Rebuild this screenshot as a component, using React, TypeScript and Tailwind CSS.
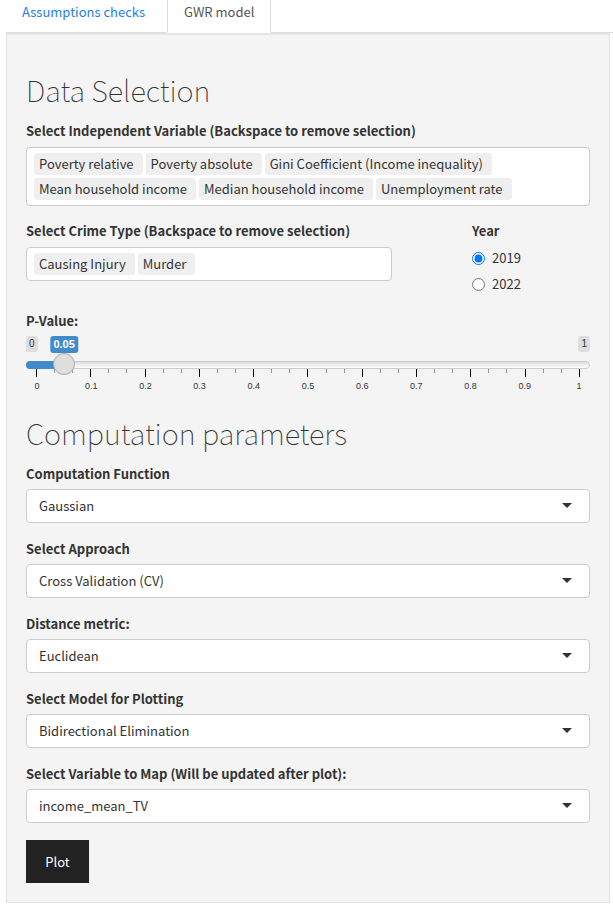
import { useState } from "react";
import type { ReactNode } from "react";

const MAJOR_TICKS = ["0", "0.1", "0.2", "0.3", "0.4", "0.5", "0.6", "0.7", "0.8", "0.9", "1"];
const TICKS = Array.from({ length: 31 }, (_, i) => i % 3 === 0);

function Heading({ children }: { children: ReactNode }) {
  return <h2 className="text-[29px] leading-[34px] font-thin">{children}</h2>;
}

function TagBox({ id, label, tags }: { id: string; label: string; tags: string[] }) {
  return (
    <div>
      <label htmlFor={id} className="mb-[6px] block leading-5 font-bold">
        {label}
      </label>
      <div className="flex flex-wrap gap-[3px] rounded border border-[#ccc] bg-white px-[7px] py-[5px]">
        {tags.map((tag) => (
          <span key={tag} className="rounded-[3px] bg-[#efefef] pr-[9px] pl-[5px] leading-[22px]">
            {tag}
          </span>
        ))}
        <input id={id} type="text" className="w-1 outline-none" />
      </div>
    </div>
  );
}

function SelectField({ id, label, value }: { id: string; label: string; value: string }) {
  return (
    <div className="mb-4">
      <label htmlFor={id} className="mb-[5px] block leading-5 font-bold">
        {label}
      </label>
      <div className="relative">
        <select
          id={id}
          className="block h-[34px] w-full appearance-none rounded border border-[#ccc] bg-white px-3 outline-none"
        >
          <option>{value}</option>
        </select>
        <span className="pointer-events-none absolute top-[14px] right-[18px] border-x-5 border-t-5 border-x-transparent border-t-[#333]" />
      </div>
    </div>
  );
}

function PValueSlider() {
  const [value, setValue] = useState(0.05);
  const center = `calc(11px + (100% - 22px) * ${value})`;
  return (
    <div>
      <label htmlFor="pvalue" className="block leading-5 font-bold">
        P-Value:
      </label>
      <div className="relative mt-[5px] flex h-4 justify-between font-['Liberation_Sans',Arial,sans-serif] text-[10px] leading-4">
        <span className="rounded-[3px] bg-[#dedede] px-[3px]">0</span>
        <span className="rounded-[3px] bg-[#dedede] px-[3px]">1</span>
        <output
          htmlFor="pvalue"
          className="absolute top-0 -translate-x-1/2 rounded-[3px] bg-[#428bca] px-[3px] text-[11px] leading-[17px] font-bold text-white"
          style={{ left: center }}
        >
          {value}
        </output>
      </div>
      <div className="relative mt-[9px] h-2">
        <div className="h-2 overflow-hidden rounded-lg border border-[#ccc] bg-linear-to-b from-[#dedede] to-white" />
        <div className="absolute top-0 left-0 h-2 rounded-l-lg bg-[#428bca]" style={{ width: center }} />
        <input
          id="pvalue"
          type="range"
          min={0}
          max={1}
          step={0.01}
          value={value}
          onChange={(e) => setValue(Number(e.target.value))}
          className="absolute -top-2 left-0 m-0 h-[22px] w-full appearance-none bg-transparent outline-none [&::-webkit-slider-thumb]:size-[22px] [&::-webkit-slider-thumb]:appearance-none [&::-webkit-slider-thumb]:rounded-full [&::-webkit-slider-thumb]:border [&::-webkit-slider-thumb]:border-[#ababab] [&::-webkit-slider-thumb]:bg-[#dedede]"
        />
      </div>
      <div className="mx-[10px] flex h-2 justify-between">
        {TICKS.map((major, i) => (
          <span key={i} className={major ? "h-2 w-px bg-black" : "h-1 w-px bg-[#999]"} />
        ))}
      </div>
      <div className="mx-[11px] mt-[3px] flex justify-between font-['Liberation_Sans',Arial,sans-serif] text-[9px] leading-3">
        {MAJOR_TICKS.map((tick) => (
          <span key={tick} className="flex w-0 justify-center">
            {tick}
          </span>
        ))}
      </div>
    </div>
  );
}

export default function App() {
  return (
    <div className="min-h-screen bg-white pl-[6px] font-['Noto_Sans_CJK_SC','Source_Sans_Pro',sans-serif] text-[13px] text-[#333]">
      <nav className="flex h-[33px] gap-[6px] border-b border-[#ddd] leading-6">
        <a href="#assumptions" className="px-4 text-[#2780e3]">
          Assumptions checks
        </a>
        <a href="#gwr" className="h-[33px] border-x border-b border-x-[#ddd] border-b-white bg-white px-4 text-[#555]">
          GWR model
        </a>
      </nav>
      <main className="mr-[3px] border border-t-0 border-[#e3e3e3] bg-[#f4f4f4] px-[19px] pt-[39px] pb-[19px] shadow-[inset_0_2px_1px_rgba(0,0,0,0.06)]">
        <Heading>Data Selection</Heading>
        <div className="mt-[15px]">
          <TagBox
            id="independent"
            label="Select Independent Variable (Backspace to remove selection)"
            tags={[
              "Poverty relative",
              "Poverty absolute",
              "Gini Coefficient (Income inequality)",
              "Mean household income",
              "Median household income",
              "Unemployment rate",
            ]}
          />
        </div>
        <div className="mt-[15px] mb-[17px] grid grid-cols-[366fr_118fr] gap-20">
          <TagBox
            id="crime"
            label="Select Crime Type (Backspace to remove selection)"
            tags={["Causing Injury", "Murder"]}
          />
          <fieldset>
            <legend className="mb-[7px] leading-5 font-bold">Year</legend>
            <div className="flex flex-col gap-[6px] leading-5">
              <label className="flex items-center gap-[7px]">
                <input type="radio" name="year" defaultChecked className="size-[13px]" />
                2019
              </label>
              <label className="flex items-center gap-[7px]">
                <input type="radio" name="year" className="size-[13px]" />
                2022
              </label>
            </div>
          </fieldset>
        </div>
        <PValueSlider />
        <div className="mt-[23px] mb-[15px]">
          <Heading>Computation parameters</Heading>
        </div>
        <SelectField id="function" label="Computation Function" value="Gaussian" />
        <SelectField id="approach" label="Select Approach" value="Cross Validation (CV)" />
        <SelectField id="metric" label="Distance metric:" value="Euclidean" />
        <SelectField id="model" label="Select Model for Plotting" value="Bidirectional Elimination" />
        <SelectField id="variable" label="Select Variable to Map (Will be updated after plot):" value="income_mean_TV" />
        <button type="button" className="mt-[17px] block h-[43px] min-w-[63px] bg-[#222] px-[19px] text-white">
          Plot
        </button>
      </main>
    </div>
  );
}
